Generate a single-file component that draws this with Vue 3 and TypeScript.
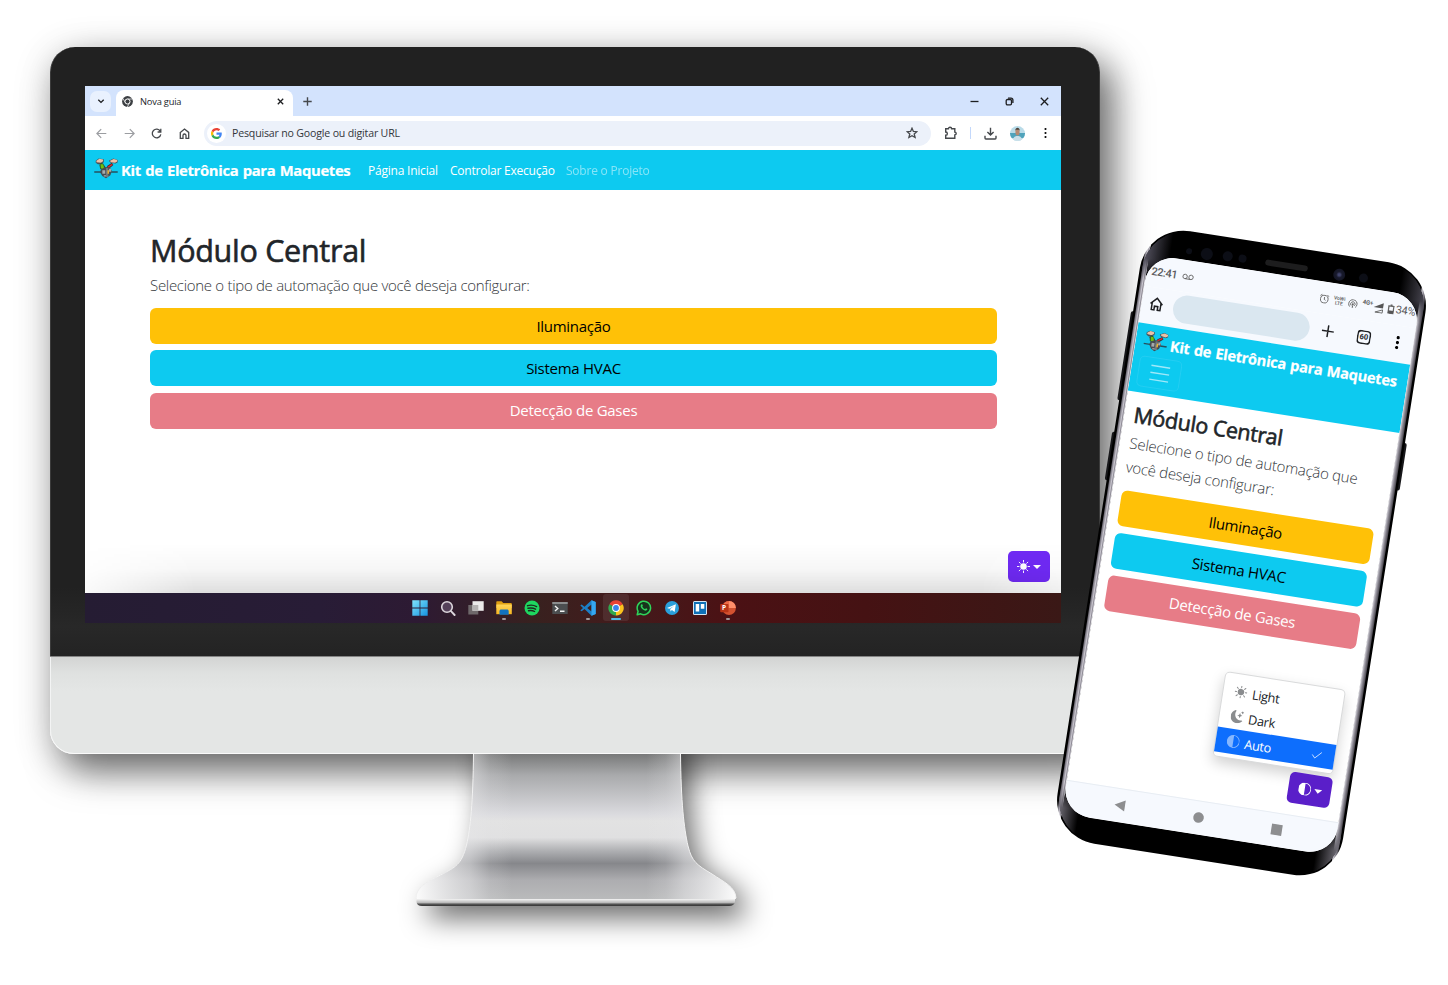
<script setup lang="ts">
interface Action {
  label: string
  tone: string
}

const actions: Action[] = [
  { label: 'Iluminação', tone: 'warning' },
  { label: 'Sistema HVAC', tone: 'info' },
  { label: 'Detecção de Gases', tone: 'danger' },
]

const links = [
  { label: 'Página Inicial', cls: 'l1' },
  { label: 'Controlar Execução', cls: 'l2' },
  { label: 'Sobre o Projeto', cls: 'l3 muted' },
]

const taskbar: string[] = [
  'win', 'search', 'tasks', 'folder', 'spotify', 'term',
  'code', 'chrome', 'whats', 'telegram', 'trello', 'ppt',
]
const running = ['folder', 'code', 'ppt']

const themes = [
  { label: 'Light', icon: 'sun' },
  { label: 'Dark', icon: 'moon' },
  { label: 'Auto', icon: 'half' },
]
</script>

<template>
  <svg class="defs" width="0" height="0" aria-hidden="true">
    <defs>
      <linearGradient id="gWin" x1="0" y1="0" x2="1" y2="1">
        <stop offset="0" stop-color="#7fe3fb" /><stop offset="1" stop-color="#1593e0" />
      </linearGradient>
      <linearGradient id="gFold" x1="0" y1="0" x2="0" y2="1">
        <stop offset="0" stop-color="#ffd65a" /><stop offset="1" stop-color="#f9b71f" />
      </linearGradient>
    </defs>
    <symbol id="i-sun" viewBox="0 0 16 16">
      <circle cx="8" cy="8" r="4" fill="currentColor" />
      <g stroke="currentColor" stroke-width="1.200" stroke-linecap="round">
        <path d="M8 .5v2M8 13.5v2M.5 8h2M13.5 8h2M2.7 2.7l1.4 1.4M11.9 11.9l1.4 1.4M2.7 13.3l1.4-1.4M11.9 4.1l1.4-1.4" />
      </g>
    </symbol>
    <symbol id="i-moon" viewBox="0 0 16 16">
      <path fill="currentColor" d="M6 .28a.77.77 0 0 1 .08.86 7.2 7.2 0 0 0-.88 3.46c0 4.02 3.28 7.28 7.32 7.28.53 0 1.04-.06 1.53-.16a.79.79 0 0 1 .81.31.73.73 0 0 1-.03.9A8.35 8.35 0 0 1 8.34 16C3.73 16 0 12.29 0 7.71 0 4.27 2.11 1.31 5.12.06A.75.75 0 0 1 6 .28z" />
      <path fill="currentColor" d="M10.8 3.15a.22.22 0 0 1 .41 0l.39 1.16c.17.52.58.93 1.1 1.1l1.16.39a.22.22 0 0 1 0 .41l-1.16.39c-.52.17-.93.58-1.1 1.1l-.39 1.16a.22.22 0 0 1-.41 0l-.39-1.16a1.7 1.7 0 0 0-1.1-1.1l-1.16-.39a.22.22 0 0 1 0-.41l1.16-.39c.52-.17.93-.58 1.1-1.1zM13.86.1a.15.15 0 0 1 .28 0l.26.77c.11.35.39.62.73.74l.77.26a.15.15 0 0 1 0 .27l-.77.26c-.34.12-.62.39-.73.74l-.26.77a.15.15 0 0 1-.28 0l-.26-.77a1.2 1.2 0 0 0-.73-.74l-.77-.26a.15.15 0 0 1 0-.27l.77-.26c.34-.12.62-.39.73-.74z" />
    </symbol>
    <symbol id="i-half" viewBox="0 0 16 16">
      <path fill="currentColor" d="M8 15A7 7 0 1 0 8 1zm0 1A8 8 0 1 1 8 0a8 8 0 0 1 0 16" />
    </symbol>
    <symbol id="i-check" viewBox="0 0 16 16">
      <path fill="none" stroke="currentColor" stroke-width="1.2" stroke-linecap="round" stroke-linejoin="round" d="M2.5 8.5l3.5 3.8 8-8.3" />
    </symbol>
    <symbol id="i-wires" viewBox="0 0 32 30">
      <path d="M5 10 2 8V5l4-3 7 1v4l-3 2-2 1zM22 8l-2-3 6-3 6 2v3l-3 2z" fill="#45525a" />
      <path d="M3 7V5l4-2.500 5 .8v2.400L9 8zM22.500 7l-1-2 5-2.300 4.800 1.300v2l-3 2z" fill="#ecc0a6" />
      <path d="M9 8l3 1 4 6-3 4-5-3-1-5z" fill="#2b5230" />
      <path d="M8.500 10l3.500 0 2 6-2 1-3-2z" fill="#6fc010" />
      <path d="M24 8l-6 4-2 4 3 1 7-6z" fill="#3b2b32" />
      <path d="M23.500 9.500l-6 4 1 1.700 7-4.700z" fill="#e02c2c" />
      <path d="M0 20.500h9M23 20.500h9" stroke="#26505e" stroke-width="2" />
      <path d="M9 17l5-3h7l3 5-2 6-6 4-5-3-3-5z" fill="#474c51" />
      <path d="M11 18h4v5h-4zM20 16h3v4h-3zM13 25h6v1.500h-6z" fill="#a3abae" />
      <path d="M16 15h3v11h-3z" fill="#71777b" />
      <path d="M18 18h2v5h-2z" fill="#f2b632" />
    </symbol>
    <symbol id="i-chromegray" viewBox="0 0 20 20">
      <circle cx="10" cy="10" r="9.800" fill="#3c3f43" />
      <path d="M10 5.500h9M6 12 1.800 4.600M14 12.200 9.600 20" stroke="#fff" stroke-width="1.300" />
      <circle cx="10" cy="10" r="4.600" fill="#3c3f43" stroke="#fff" stroke-width="1.800" />
    </symbol>
    <symbol id="i-g" viewBox="0 0 48 48">
      <path fill="#ea4335" d="M24 9.500c3.540 0 6.710 1.220 9.210 3.600l6.850-6.850C35.900 2.380 30.470 0 24 0 14.620 0 6.510 5.380 2.560 13.220l7.980 6.190C12.430 13.720 17.740 9.500 24 9.500z" />
      <path fill="#4285f4" d="M46.980 24.550c0-1.570-.15-3.090-.38-4.550H24v9.020h12.940c-.58 2.960-2.260 5.480-4.780 7.180l7.730 6c4.510-4.180 7.090-10.360 7.090-17.650z" />
      <path fill="#fbbc05" d="M10.530 28.590a14.500 14.500 0 0 1 0-9.180l-7.980-6.190a24 24 0 0 0 0 21.560z" />
      <path fill="#34a853" d="M24 48c6.480 0 11.930-2.130 15.890-5.810l-7.730-6c-2.150 1.450-4.920 2.300-8.160 2.300-6.260 0-11.570-4.220-13.470-9.910l-7.980 6.190C6.510 42.620 14.620 48 24 48z" />
    </symbol>

    <symbol id="t-win" viewBox="0 0 16 16"><path fill="url(#gWin)" d="M.3.300h7.300v7.300H.3zM8.400.300h7.300v7.300H8.400zM.3 8.400h7.300v7.300H.3zM8.400 8.400h7.300v7.300H8.400z" /></symbol>
    <symbol id="t-search" viewBox="0 0 16 16"><circle cx="7" cy="7" r="5.300" fill="#55415a" stroke="#dcd6dc" stroke-width="1.600" /><path d="M11 11.200l3.600 3.800" stroke="#dcd6dc" stroke-width="1.900" stroke-linecap="round" /></symbol>
    <symbol id="t-tasks" viewBox="0 0 16 16"><path fill="#6e686a" d="M.3 5h10v9.500H.3z" /><path fill="#eceaea" d="M4.500 1.200h11.200v9.600H4.500z" /><path fill="#b5b2b2" d="M4.500 5h5.800v5.800H4.500z" /></symbol>
    <symbol id="t-folder" viewBox="0 0 16 16"><path fill="#e0a012" d="M.3 2.300c0-.6.400-1 1-1h4.200l1.800 1.800H15c.5 0 .8.400.8.900V8H.3z" /><path fill="url(#gFold)" d="M.3 4.500h15.500v9.700H.3z" /><path fill="#1173c0" d="M3.500 14.800v-3.500c0-1 .7-1.700 1.600-1.700h6c.9 0 1.600.7 1.600 1.700v3.500z" /></symbol>
    <symbol id="t-spotify" viewBox="0 0 16 16"><circle cx="8" cy="8" r="7.500" fill="#1ed760" /><path d="M3.500 5.700c3-.9 6.300-.6 9.100.9M4 8.300c2.600-.7 5.200-.4 7.600.9M4.500 10.700c2.200-.5 4.200-.3 6.100.8" fill="none" stroke="#1b2b1e" stroke-width="1.400" stroke-linecap="round" /></symbol>
    <symbol id="t-term" viewBox="0 0 16 16"><path fill="#4b4e50" d="M.3 2h15.400v12H.3z" /><path fill="#8b8d8e" d="M.3 2h15.400v2H.3z" /><path d="M3 6l2.800 2.500L3 11M8 11.300h4.500" fill="none" stroke="#f4f4f4" stroke-width="1.400" /></symbol>
    <symbol id="t-code" viewBox="0 0 16 16"><path fill="#1c7fc7" d="M11.500.300 15.700 2v12l-4.200 1.700-7-6.600-2.800 2.200L.3 10.500 3 8 .3 5.500l1.400-.9 2.800 2.200zM11.500 4.500 7.200 8l4.300 3.500z" fill-rule="evenodd" /><path fill="#35a7f2" d="M11.500.300 15.700 2v12l-4.200 1.700z" /></symbol>
    <symbol id="t-chrome" viewBox="0 0 16 16"><path fill="#e94335" d="M8 8 1.400 4.200A7.600 7.600 0 0 1 14.700 4.300z" /><path fill="#fcc31e" d="M8 8l6.700-3.800A7.600 7.600 0 0 1 8 15.600z" /><path fill="#2fa84f" d="M8 8v7.600A7.600 7.600 0 0 1 1.400 4.200z" /><path fill="#2fa84f" d="M5 9.500l2 3L8 15.500 5 14z" /><circle cx="8" cy="8" r="3.900" fill="#fff" /><circle cx="8" cy="8" r="2.900" fill="#3b82ee" /></symbol>
    <symbol id="t-whats" viewBox="0 0 16 16"><path d="M1.200 14.800l.9-3.500a6.700 6.700 0 1 1 2.600 2.500z" fill="#17331c" stroke="#2fd45a" stroke-width="1.500" stroke-linejoin="round" /><path d="M5.200 4.600c.8-.7 1.300-.1 1.600 1 .1.500-.5.700-.4 1.100.6 1.200 1.500 1.900 2.500 2.300.5 0 .7-.8 1.100-.8.900.3 1.600.7 1.300 1.400-.5 1.200-1.900 1.300-3.100.7-1.700-.7-2.900-2-3.500-3.500-.2-.9 0-1.700.5-2.200z" fill="#2fd45a" /></symbol>
    <symbol id="t-telegram" viewBox="0 0 16 16"><circle cx="8" cy="8" r="7" fill="#2a9fdb" /><path fill="#fff" d="M3 7.900l8.900-3.600-1.300 7.700-2.700-1.900-1.400 1.400-.3-2.500 3.800-3-4.700 2.700z" /></symbol>
    <symbol id="t-trello" viewBox="0 0 16 16"><rect x="1" y="1" width="14" height="14" rx="1.500" fill="#d4e6f5" /><rect x="2" y="2" width="12" height="12" fill="#0e70b8" /><path fill="#fff" d="M3.700 4h3.500v7.500H3.700zM8.800 4h3.500v4.700H8.800z" /></symbol>
    <symbol id="t-ppt" viewBox="0 0 16 16"><circle cx="9" cy="8" r="6.900" fill="#d35230" /><path fill="#ff8f6b" d="M9 1.100A6.900 6.900 0 0 1 15.900 8H9z" /><path fill="#ed6c47" d="M9 1.100V8H2.100A6.900 6.900 0 0 1 9 1.100z" /><rect x=".2" y="4" width="8.300" height="8.300" rx=".8" fill="#b83416" /></symbol>
  </svg>

  <div class="scene">
    <section class="monitor">
      <div class="bezel">
        <div class="browser">
          <div class="tabs">
            <span class="tab-menu">
              <svg width="8" height="8" viewBox="0 0 8 8"><path d="M1.300 2.700 4 5.400l2.700-2.700" class="ln dark" /></svg>
            </span>
            <div class="tab">
              <svg width="11" height="11"><use href="#i-chromegray" /></svg>
              <span class="tab-title">Nova guia</span>
              <svg class="close" width="7" height="7" viewBox="0 0 7 7"><path d="M.8.800l5.400 5.400M6.200.800.8 6.200" class="ln dark" /></svg>
            </div>
            <svg class="plus" width="9" height="9" viewBox="0 0 9 9"><path d="M4.500.300v8.400M.3 4.500h8.400" class="ln thick" /></svg>
            <div class="win-ctl">
              <svg width="9" height="9" viewBox="0 0 9 9"><path d="M.5 4.500h8" class="ln dark" /></svg>
              <svg width="9" height="9" viewBox="0 0 9 9"><rect x="1.200" y="2.500" width="5.300" height="5.300" rx="1.200" class="ln dark" /><path d="M3 1.200h3a1.900 1.900 0 0 1 1.900 1.900v3" class="ln dark" /></svg>
              <svg width="9" height="9" viewBox="0 0 9 9"><path d="M.8.800l7.400 7.400M8.200.800.8 8.200" class="ln dark" /></svg>
            </div>
          </div>

          <div class="toolbar">
            <svg width="11" height="11" viewBox="0 0 11 11"><path d="M10.300 5.500H1M5.200 1.200.9 5.500l4.300 4.300" class="ln gray" /></svg>
            <svg width="11" height="11" viewBox="0 0 11 11"><path d="M.7 5.500H10M5.800 1.200l4.300 4.300-4.300 4.300" class="ln gray" /></svg>
            <svg width="11" height="11" viewBox="0 0 11 11"><path d="M9.300 3.300a4.300 4.300 0 1 0 .5 3M9.800.800v3.200H6.600" class="ln med" /></svg>
            <svg width="11" height="11" viewBox="0 0 11 11"><path d="M1.300 4.400 5.500 1l4.200 3.400v5.900H7V7.500a1.500 1.500 0 0 0-3 0v2.800H1.300z" class="ln med" /></svg>
            <div class="omnibox">
              <span class="g-badge"><svg width="11" height="11"><use href="#i-g" /></svg></span>
              <span class="placeholder">Pesquisar no Google ou digitar URL</span>
              <svg class="star" width="12" height="12" viewBox="0 0 12 12"><path d="M6 1.200l1.400 3.200 3.500.3-2.700 2.300.9 3.500L6 8.700l-3.100 1.800.9-3.500L1.100 4.700l3.500-.3z" class="ln med" /></svg>
            </div>
            <div class="tools">
              <svg width="14" height="14" viewBox="0 0 14 14"><path d="M1.700 2.800h2.700a1.600 1.600 0 0 1 3.200 0h3.200v3.300a1.400 1.400 0 0 1 0 2.800v3.300H1.700V9.300a1.600 1.600 0 0 0 0-3.300z" class="ln thick" /></svg>
              <i class="sep"></i>
              <svg width="13" height="13" viewBox="0 0 13 13"><path d="M6.500.800v7M3.400 5l3.100 3.100L9.600 5M1 8.700v2.400c0 .5.400.9.900.9h9.200c.5 0 .9-.4.900-.9V8.700" class="ln thick" /></svg>
              <svg class="avatar" width="15" height="15" viewBox="0 0 15 15"><rect width="15" height="15" fill="#b9dbe8" /><rect y="7" width="15" height="5" fill="#4fa3bb" /><path d="M3 15c0-4 2-5 4.500-5s4.500 1 4.500 5z" fill="#c9e0ea" /><ellipse cx="7.500" cy="6" rx="2.100" ry="3.600" fill="#b58a73" /><path d="M5.300 4.800c-.2-4 4.600-4 4.400 0L9 3.800H6z" fill="#4b4038" /></svg>
              <svg width="3" height="12" viewBox="0 0 3 12"><circle cx="1.500" cy="2" r="1.050" /><circle cx="1.500" cy="6" r="1.050" /><circle cx="1.500" cy="10" r="1.050" /></svg>
            </div>
          </div>

          <nav class="site-nav">
            <svg class="brand-icon" width="24" height="22"><use href="#i-wires" /></svg>
            <strong class="brand">Kit de Eletrônica para Maquetes</strong>
            <a v-for="l in links" :key="l.label" class="nav-link" :class="l.cls">{{ l.label }}</a>
          </nav>

          <main class="page">
            <h1>Módulo Central</h1>
            <p>Selecione o tipo de automação que você deseja configurar:</p>
            <div class="actions">
              <button v-for="a in actions" :key="a.label" :class="a.tone"><span>{{ a.label }}</span></button>
            </div>
          </main>
          <button class="theme-btn">
            <svg width="13" height="13"><use href="#i-sun" /></svg><i class="caret"></i>
          </button>
        </div>
        <div class="taskbar">
          <span v-for="t in taskbar" :key="t" class="task" :class="{ active: t === 'chrome', open: running.includes(t) }">
            <svg width="16" height="16"><use :href="'#t-' + t" /></svg>
            <b v-if="t === 'ppt'" class="ppt-letter">P</b>
          </span>
        </div>
      </div>
      <div class="chin"></div>
    </section>

    <svg class="stand" width="400" height="210" viewBox="376 753 400 210">
      <defs>
        <linearGradient id="gNeck" x1="0" y1="754" x2="0" y2="906" gradientUnits="userSpaceOnUse">
          <stop offset="0" stop-color="#787979" /><stop offset=".14" stop-color="#a9aaac" />
          <stop offset=".4" stop-color="#dbdbdf" /><stop offset=".44" stop-color="#e2e2e2" />
          <stop offset=".55" stop-color="#e0e0e1" /><stop offset=".64" stop-color="#adaeb1" />
          <stop offset=".72" stop-color="#86878b" /><stop offset=".83" stop-color="#adadb0" />
          <stop offset=".95" stop-color="#b9babb" />
        </linearGradient>
        <linearGradient id="gSide" x1="416" y1="0" x2="736" y2="0" gradientUnits="userSpaceOnUse">
          <stop offset="0" stop-color="#fff" stop-opacity=".95" /><stop offset=".17" stop-color="#e6e6e8" stop-opacity=".55" />
          <stop offset=".23" stop-color="#e6e6e8" stop-opacity=".18" /><stop offset=".3" stop-color="#eee" stop-opacity="0" />
          <stop offset=".72" stop-color="#eee" stop-opacity="0" /><stop offset=".78" stop-color="#e6e6e8" stop-opacity=".18" />
          <stop offset=".84" stop-color="#e6e6e8" stop-opacity=".55" /><stop offset="1" stop-color="#fff" stop-opacity=".95" />
        </linearGradient>
        <filter id="soft" x="-30%" y="-30%" width="160%" height="160%"><feGaussianBlur stdDeviation="14" /></filter>
        <linearGradient id="gFoot" x1="0" y1="0" x2="0" y2="1">
          <stop offset="0" stop-color="#f4f4f4" /><stop offset=".5" stop-color="#bcbcbc" /><stop offset=".75" stop-color="#555" /><stop offset="1" stop-color="#333" />
        </linearGradient>
      </defs>
      <path filter="url(#soft)" fill="#000" fill-opacity=".58" d="M482 740v70c0 30-6 50-12 62-8 12-42 20-42 32v14h316v-14c0-14-36-26-42-36-8-12-12-50-12-80v-48z" />
      <path fill="url(#gNeck)" d="M473.500 753c-.5 50-3 75-7 92-5 20-11 22-26 30-14 7-24 12-24.500 23l4 4h312l4-4c-.5-11-12-16-24-24-15-9-20-12-24-28-4-18-7-43-7.500-93z" />
      <path fill="url(#gSide)" stroke="#f2f2f2" stroke-width="1" d="M473.500 753c-.5 50-3 75-7 92-5 20-11 22-26 30-14 7-24 12-24.500 23l4 4h312l4-4c-.5-11-12-16-24-24-15-9-20-12-24-28-4-18-7-43-7.500-93z" />
      <path fill="url(#gFoot)" d="M416.500 899h318.500v3q-1 4-6 4H422q-5 0-5.500-4z" />
    </svg>

    <section class="phone">
      <i class="key k1"></i><i class="key k2"></i><i class="key k3"></i>
      <div class="shell">
        <div class="sensors">
          <i class="s1"></i><i class="s2"></i><i class="s3"></i><i class="s4"></i><i class="speaker"></i><i class="cam"></i><i class="s5"></i>
        </div>
        <div class="screen">
          <div class="status">
            <span class="clock">22:41</span>
            <svg class="vm" width="12" height="7" viewBox="0 0 12 7"><circle cx="3" cy="3.500" r="2.200" class="ln st" /><circle cx="9" cy="3.500" r="2.200" class="ln st" /><path d="M3 5.700h6" class="ln st" /></svg>
            <span class="status-right">
              <svg width="10" height="10" viewBox="0 0 10 10"><circle cx="5" cy="5.400" r="3.800" class="ln st" /><path d="M5 3.300v2.300l1.400.8M.7 2.300 2.400.900M9.300 2.300 7.600.900" class="ln st" /></svg>
              <span class="volte"><b>VoWi</b><b>LTE</b></span>
              <svg width="10" height="9" viewBox="0 0 10 9"><path d="M2.200 7.800a4.200 4.200 0 1 1 5.600 0M3.600 6.500a2.200 2.200 0 1 1 2.800 0" class="ln st" /><circle cx="5" cy="5" r="1" fill="#666" /><path d="M4.200 8.500h1.600L5 5z" fill="#666" /></svg>
              <span class="g4">4G+</span>
              <svg width="10" height="11" viewBox="0 0 10 11"><path d="M0 5.500 9.500.300v5.200z" fill="#555" /><path d="M2 10.300 9.300 7v3.300z" class="ln st" /></svg>
              <svg class="bat" width="7" height="10" viewBox="0 0 7 10"><path d="M1 2h5v7.300H1zM2.500.800h2" class="ln st bold" /><path d="M1 6.500h5v2.800H1z" fill="#555" /></svg>
              <span class="pct">34%</span>
            </span>
          </div>
          <div class="addr">
            <svg class="p-home" width="14" height="15" viewBox="0 0 14 15"><path d="M1 7.500 7 1.500 13 7.500M2.600 6.200v7.100h2.700V9.600h3.400v3.700h2.700V6.200" class="ln heavy" /></svg>
            <span class="pill"></span>
            <svg class="p-plus" width="13" height="13" viewBox="0 0 13 13"><path d="M6.500.500v12M.5 6.500h12" class="ln heavy" /></svg>
            <span class="count">60</span>
            <svg class="p-dots" width="4" height="14" viewBox="0 0 4 14"><circle cx="2" cy="2" r="1.600" /><circle cx="2" cy="7" r="1.600" /><circle cx="2" cy="12" r="1.600" /></svg>
          </div>
          <nav class="p-nav">
            <div class="p-brand">
              <svg class="brand-icon" width="24" height="22"><use href="#i-wires" /></svg>
              <strong class="brand">Kit de Eletrônica para Maquetes</strong>
            </div>
            <span class="burger"><svg width="20" height="17" viewBox="0 0 20 17"><path d="M.5 1.500h19M.5 8.500h19M.5 15.500h19" stroke="#9fe8f9" stroke-width="1.400" /></svg></span>
          </nav>
          <main class="p-page">
            <h2>Módulo Central</h2>
            <p>Selecione o tipo de automação que<br />você deseja configurar:</p>
            <div class="actions">
              <button v-for="a in actions" :key="a.label" :class="a.tone"><span>{{ a.label }}</span></button>
            </div>
          </main>
          <div class="menu">
            <div v-for="t in themes" :key="t.label" class="item" :class="{ on: t.label === 'Auto' }">
              <svg width="13" height="13"><use :href="'#i-' + t.icon" /></svg>
              <span>{{ t.label }}</span>
              <svg v-if="t.label === 'Auto'" class="check" width="12" height="12"><use href="#i-check" /></svg>
            </div>
          </div>
          <button class="theme-btn p-theme">
            <svg width="13" height="13"><use href="#i-half" /></svg><i class="caret"></i>
          </button>
          <div class="android">
            <svg width="12" height="12" viewBox="0 0 12 12"><path d="M11.500.500v11L1 6z" fill="#8d8e90" /></svg>
            <svg width="12" height="12" viewBox="0 0 12 12"><circle cx="6" cy="6" r="5.300" fill="#8d8e90" /></svg>
            <svg width="12" height="12" viewBox="0 0 12 12"><rect x=".6" y=".6" width="10.800" height="10.800" fill="#8d8e90" /></svg>
          </div>
        </div>
      </div>
    </section>
  </div>
</template>

<style>
html,
body {
  background: #fff;
  overflow: hidden;
}
</style>

<style scoped>
* {
  box-sizing: border-box;
}
.defs {
  position: absolute;
}
svg {
  display: block;
  flex: none;
}
.scene {
  position: relative;
  width: 1448px;
  height: 985px;
  padding: 47px 0 0 50px;
  overflow: hidden;
  font-family: 'Open Sans', 'Noto Sans', sans-serif;
  color: #212529;
}
.ln {
  fill: none;
  stroke: #45484c;
  stroke-width: 1.1;
}
.ln.dark {
  stroke: #1d1e20;
  stroke-width: 1.3;
}
.ln.gray {
  stroke: #9b9da1;
  stroke-width: 1.2;
}
.ln.med {
  stroke-width: 1.3;
}
.ln.thick {
  stroke-width: 1.4;
}
.ln.st {
  stroke: #666;
  stroke-width: 0.9;
}
.ln.st.bold {
  stroke-width: 1.3;
}
.ln.heavy {
  stroke: #1e1f22;
  stroke-width: 1.5;
}

/* Monitor */
.monitor {
  position: relative;
  z-index: 1;
  width: 1050px;
  height: 707px;
  border-radius: 25px;
  box-shadow: 13px 17px 36px rgba(0, 0, 0, 0.52), 2px 8px 40px rgba(0, 0, 0, 0.2);
}
.bezel {
  height: 609px;
  padding: 39px 39px 0 34px;
  background: linear-gradient(#212121 0 540px, #282828 580px, #232323);
  border-radius: 25px 25px 0 0;
  border: solid #3b3b3b;
  border-width: 0 1px;
}
.chin {
  height: 98px;
  background: linear-gradient(#d3d4d3, #dfe1e0 16px, #e4e6e5 34px);
  border-top: 1px solid #858585;
  border-radius: 0 0 24px 24px;
  box-shadow: inset 0 -1px 0 #fafafa, inset 1px 0 0 #f3f4f4;
}
.browser {
  position: relative;
  width: 976px;
  height: 507px;
  background: #fff;
}
.browser::after {
  content: '';
  position: absolute;
  inset: auto 0 0;
  height: 50px;
  background: linear-gradient(rgba(0, 0, 0, 0), rgba(0, 0, 0, 0.03) 50%, rgba(0, 0, 0, 0.13));
  -webkit-mask: linear-gradient(90deg, rgba(0, 0, 0, 0.15), #000 110px calc(100% - 80px), rgba(0, 0, 0, 0.5));
  mask: linear-gradient(90deg, rgba(0, 0, 0, 0.15), #000 110px calc(100% - 80px), rgba(0, 0, 0, 0.5));
}
.tabs {
  display: flex;
  align-items: center;
  height: 30px;
  padding-left: 5px;
  background: #d3e3fd;
}
.tab-menu {
  display: grid;
  place-items: center;
  width: 21px;
  height: 21px;
  border-radius: 7px;
  background: #e9f1fe;
}
.tab {
  display: flex;
  align-items: center;
  align-self: flex-end;
  width: 177px;
  height: 26px;
  margin-left: 5px;
  padding: 0 9px 3px 6px;
  border-radius: 8px 8px 0 0;
  background: #fff;
}
.tab-title {
  margin-left: 7px;
  font-size: 9.300px;
  letter-spacing: -0.200px;
  white-space: nowrap;
}
.close {
  margin-left: auto;
}
.plus {
  margin-left: 10px;
}
.win-ctl {
  display: flex;
  gap: 26px;
  margin: 0 12px 0 auto;
}
.toolbar {
  display: flex;
  align-items: center;
  height: 34px;
  padding-left: 11px;
  gap: 16.500px;
  background: #fff;
}
.omnibox {
  display: flex;
  align-items: center;
  width: 727px;
  height: 25px;
  margin-left: -2px;
  border-radius: 13px;
  background: #ecf1fa;
}
.g-badge {
  display: grid;
  place-items: center;
  width: 19px;
  height: 19px;
  margin-left: 3px;
  border-radius: 50%;
  background: #fff;
}
.placeholder {
  margin-left: 6px;
  font-size: 10.600px;
  letter-spacing: -0.180px;
  white-space: nowrap;
  color: #33363a;
}
.star {
  margin: 0 13px 0 auto;
}
.tools {
  display: flex;
  align-items: center;
  margin-left: -3.500px;
}
.sep {
  width: 1px;
  height: 12px;
  margin: 0 13px 0 12px;
  background: #c3d8fb;
}
.avatar {
  margin: 0 19px 0 13px;
  border-radius: 50%;
}
.site-nav {
  display: flex;
  align-items: center;
  height: 40px;
  padding-left: 9px;
  background: #0dcaf0;
  color: #fff;
}
.brand-icon {
  margin-top: -4px;
}
.brand {
  width: 229px;
  margin-left: 3px;
  font-size: 14.800px;
  font-weight: 700;
  letter-spacing: -0.320px;
  word-spacing: 0.800px;
  white-space: nowrap;
  -webkit-text-stroke: 0.200px currentColor;
}
.nav-link {
  font-size: 12px;
  letter-spacing: -0.220px;
  white-space: nowrap;
}
.l1 {
  width: 70px;
  margin-left: 18px;
}
.l2 {
  width: 104px;
  margin-left: 12px;
}
.l3 {
  margin-left: 12px;
}
.muted {
  opacity: 0.5;
}
.page {
  width: 847px;
  margin: 42px 0 0 65px;
}
h1 {
  margin: 0;
  font-size: 30.500px;
  font-weight: 400;
  line-height: 36px;
  letter-spacing: -0.280px;
  white-space: nowrap;
  -webkit-text-stroke: 0.600px currentColor;
}
.page p {
  margin: 5px 0 10px;
  font-size: 15px;
  font-weight: 300;
  line-height: 25px;
  letter-spacing: -0.300px;
  white-space: nowrap;
  color: #33373b;
}
.actions {
  display: grid;
  gap: 6.300px;
}
.actions button {
  height: 36px;
  padding: 0 0 1px;
  border: 0;
  border-radius: 6px;
  font: 400 15px 'Open Sans', sans-serif;
  letter-spacing: -0.270px;
  color: #000;
}
.actions .warning {
  background: #ffc107;
}
.actions .info {
  background: #0dcaf0;
}
.actions .danger {
  background: #e77c87;
  color: #fff;
}
.theme-btn {
  position: absolute;
  right: 11px;
  bottom: 11px;
  display: flex;
  align-items: center;
  justify-content: center;
  gap: 3px;
  width: 42px;
  height: 31px;
  padding: 0;
  border: 0;
  border-radius: 5px;
  background: #702af5;
  color: #fff;
}
.caret {
  border: 4px solid transparent;
  border-top-color: #fff;
  border-bottom: 0;
}
.taskbar {
  display: flex;
  justify-content: center;
  width: 976px;
  height: 30px;
  padding-left: 2px;
  background: linear-gradient(90deg, #251c33, #281c36 24%, #2d1a33 34%, #38211f 46%, #431b1c 55%, #4b1114 66%, #451213 80%, #3a1816);
}
.task {
  position: relative;
  display: grid;
  place-items: center;
  width: 26px;
  height: 27px;
  margin: 1px 1px 0;
  border-radius: 3px;
}
.ppt-letter {
  position: absolute;
  left: 7px;
  top: 9px;
  font-size: 6.500px;
  line-height: 9px;
  color: #fff;
}
.active {
  background: rgba(255, 255, 255, 0.08);
}
.active::after,
.open::after {
  content: '';
  position: absolute;
  bottom: 1px;
  left: 11px;
  width: 4px;
  height: 2px;
  border-radius: 1px;
  background: #a09a9b;
}
.active::after {
  left: 8px;
  width: 10px;
  background: #4fb9ea;
}
.stand {
  position: relative;
  margin-left: 326px;
  margin-top: -1px;
  clip-path: inset(1px 0 0 0);
  z-index: 2;
}

/* Phone */
.phone {
  position: absolute;
  left: 1097px;
  top: 243px;
  z-index: 3;
  width: 289px;
  height: 620px;
  transform: rotate(8.900deg);
}
.shell {
  position: relative;
  width: 289px;
  height: 620px;
  padding: 29px 7px 25px;
  border-radius: 44px;
  background: linear-gradient(90deg, #000 0 2px, #77747e 3px, #c9c6cf 5px, #8e8b95 6px, #d8d6dc 7px, #000 7.500px 281px, #d3d1d8 282px, #8d8a94 284px, #55525a 286px, #000 287px);
}
.shell::before,
.shell::after {
  content: '';
  position: absolute;
  left: 2px;
  right: 2px;
  height: 54px;
}
.shell::before {
  top: 1px;
  border-radius: 42px 42px 0 0;
  background: linear-gradient(90deg, #555361, #000 26px 258px, #4a4853);
  -webkit-mask: linear-gradient(#000 60%, transparent);
  mask: linear-gradient(#000 60%, transparent);
}
.shell::after {
  bottom: 1px;
  border-radius: 0 0 42px 42px;
  background: linear-gradient(90deg, #77747e, #000 22px 262px, #77747e);
  -webkit-mask: linear-gradient(transparent, #000 45%);
  mask: linear-gradient(transparent, #000 45%);
}
.key {
  position: absolute;
  width: 5px;
  border-radius: 2px;
  background: #17171a;
}
.k1 {
  left: -2px;
  top: 88px;
  height: 90px;
}
.k2 {
  left: -2px;
  top: 210px;
  height: 49px;
}
.k3 {
  right: -2px;
  top: 176px;
  height: 48px;
}
.sensors {
  position: absolute;
  z-index: 2;
  inset: 0 0 auto;
  height: 29px;
}
.sensors i {
  position: absolute;
  border-radius: 50%;
  background: #0c0e16;
}
.sensors .s1 { left: 43px; top: 17px; width: 6px; height: 6px; }
.sensors .s2 { left: 58px; top: 14px; width: 12px; height: 12px; }
.sensors .s3 { left: 80px; top: 14px; width: 10px; height: 10px; }
.sensors .s4 { left: 96px; top: 15px; width: 8px; height: 8px; }
.sensors .s5 { left: 218px; top: 15px; width: 9px; height: 9px; }
.sensors .speaker { left: 123px; top: 16px; width: 43px; height: 6px; border-radius: 3px; background: #1d1d1e; }
.sensors .cam { left: 192px; top: 14px; width: 12px; height: 12px; background: radial-gradient(#40436a 0 1px, #181a2c 3px, #0e0f1a); }
.screen {
  position: relative;
  z-index: 1;
  display: flex;
  flex-direction: column;
  width: 275px;
  height: 566px;
  border-radius: 28px;
  overflow: hidden;
  background: #fff;
}
.status {
  display: flex;
  align-items: flex-start;
  height: 32px;
  padding: 10px 3px 0 5px;
  background: #f6f9fe;
  color: #5c5d60;
}
.clock {
  width: 27px;
  font: 500 11px/14px Roboto, sans-serif;
  letter-spacing: -0.400px;
}
.vm {
  margin: 3px 0 0 4px;
}
.status-right {
  display: flex;
  align-items: center;
  gap: 4px;
  height: 14px;
  margin-left: auto;
}
.volte {
  display: grid;
  width: 11px;
  font: 400 5px/5px Roboto, sans-serif;
  text-align: center;
}
.volte b {
  font-weight: 500;
}
.g4 {
  margin: -7px -3px 0 0;
  font: 700 6px/7px Roboto, sans-serif;
}
.bat {
  margin-right: -3px;
}
.pct {
  font: 400 11px/14px Roboto, sans-serif;
  letter-spacing: -0.200px;
}
.addr {
  display: flex;
  align-items: center;
  height: 37px;
  padding: 0 14px 4px 8px;
  background: #f6f9fe;
}
.pill {
  width: 138px;
  height: 28px;
  margin-left: 10px;
  border-radius: 14px;
  background: #dae7f0;
}
.p-plus {
  margin-left: 12px;
}
.count {
  display: grid;
  place-items: center;
  width: 14px;
  height: 14px;
  margin-left: 23px;
  border-radius: 4px;
  box-shadow: inset 0 0 0 1.500px #1e1f22;
  font: 700 7.500px/8px Roboto, sans-serif;
}
.p-dots {
  margin-left: auto;
}
.p-nav {
  height: 69px;
  padding: 4px 0 0 8px;
  background: #0dcaf0;
  color: #fff;
}
.p-brand {
  display: flex;
  align-items: center;
  height: 28px;
}
.burger {
  display: grid;
  place-items: center;
  width: 43px;
  height: 31px;
  margin-left: -1px;
  border: 1px solid rgba(50, 208, 243, 0.6);
  border-radius: 5px;
}
.p-page {
  padding: 9px 10px 0;
}
h2 {
  margin: 0;
  font-size: 21.500px;
  font-weight: 400;
  line-height: 28px;
  letter-spacing: -0.350px;
  white-space: nowrap;
  -webkit-text-stroke: 0.600px currentColor;
}
.p-page p {
  margin: 3px 0 12px;
  font-size: 15px;
  font-weight: 300;
  line-height: 23.500px;
  letter-spacing: -0.220px;
  white-space: nowrap;
  color: #33373b;
}
.p-page .actions {
  gap: 7px;
}
.p-page .actions button {
  width: 255px;
  height: 36px;
}
.menu {
  position: absolute;
  left: 140px;
  top: 400px;
  width: 122px;
  height: 86px;
  padding: 5px 0 4px;
  border: 1px solid #d9dadb;
  border-radius: 5px;
  background: #fff;
  box-shadow: 0 6px 14px rgba(0, 0, 0, 0.18);
}
.item {
  display: flex;
  align-items: center;
  height: 25px;
  padding: 0 12px 0 11px;
  font-size: 12.800px;
  letter-spacing: -0.350px;
  color: #212529;
}
.item svg {
  margin-right: 5px;
  color: #8a8c8e;
}
.item.on {
  background: #0d6efd;
  color: #fff;
}
.item.on svg {
  color: #86b7fe;
}
.item.on .check {
  margin: 0 0 0 auto;
  color: #cfe2ff;
}
.p-theme {
  right: auto;
  bottom: auto;
  left: 220px;
  top: 489px;
  width: 43px;
  background: #5a1fc9;
}
.android {
  display: flex;
  align-items: center;
  justify-content: space-between;
  height: 34px;
  margin-top: auto;
  padding: 0 54px 1px 50px;
  border-top: 1px solid #e8edf3;
  background: #f6f9fe;
}
</style>
